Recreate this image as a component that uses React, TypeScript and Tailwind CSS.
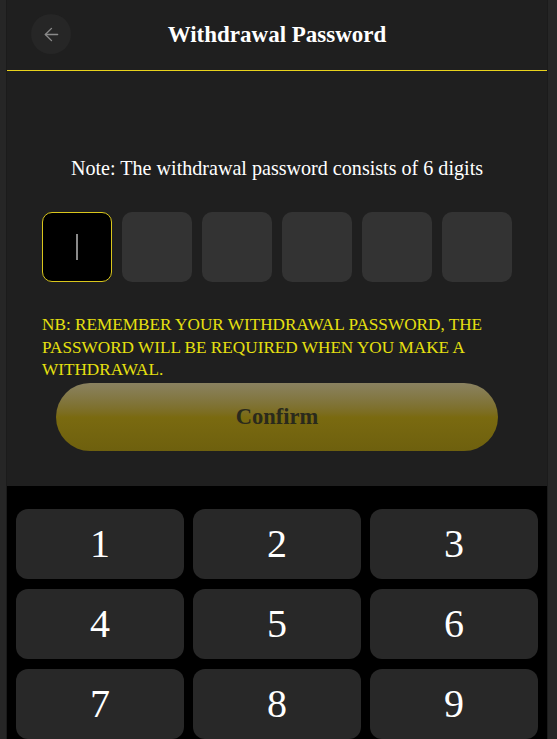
import React from "react";

const serif = { fontFamily: '"Liberation Serif", "Times New Roman", serif' };

function BackArrow() {
  return (
    <svg width="21" height="21" viewBox="0 0 24 24" fill="none" stroke="#8a8a8a" strokeWidth="1.6" strokeLinecap="round" strokeLinejoin="round">
      <path d="M19 12H5" />
      <path d="M12 19l-7-7 7-7" />
    </svg>
  );
}

export default function App() {
  const keys = ["1", "2", "3", "4", "5", "6", "7", "8", "9"];
  return (
    <div className="min-h-screen w-full bg-[#262626] flex pl-[6px]" style={serif}>
      <div className="w-[542px] h-[739px] overflow-hidden border-x border-[#1b1b1b] bg-[#1f1f1f] flex flex-col">
        {/* header */}
        <div className="relative h-[71px] shrink-0 flex items-center justify-center border-b border-[#e8d21c]">
          <button className="absolute left-[24px] top-[14px] w-[40px] h-[40px] rounded-full bg-[#262626] flex items-center justify-center">
            <BackArrow />
          </button>
          <h1 className="text-[23px] leading-[28px] font-bold text-white">Withdrawal Password</h1>
        </div>

        {/* form */}
        <div className="h-[415px] shrink-0 flex flex-col items-center pt-[85px]">
          <p className="text-[20.1px] leading-[24px] text-white">Note: The withdrawal password consists of 6 digits</p>
          <div className="mt-[32px] flex gap-[10px]">
            <div className="w-[70px] h-[70px] rounded-[10px] bg-black border border-[#d9c61c] flex items-center justify-center">
              <div className="w-[2px] h-[26px] bg-[#8a8a8a]" />
            </div>
            {[0, 1, 2, 3, 4].map((i) => (
              <div key={i} className="w-[70px] h-[70px] rounded-[10px] bg-[#333333]" />
            ))}
          </div>
          <p className="mt-[32px] w-[470px] text-[17.2px] leading-[22.5px] text-[#e6e010] uppercase">
            NB: Remember your withdrawal password, the password will be required when you make a withdrawal.
          </p>
          <button className="mt-[1px] w-[442px] h-[68px] rounded-full bg-gradient-to-b from-[#8a8260] via-[#7a6a10] to-[#6e600e] flex items-center justify-center">
            <span className="text-[22.5px] font-bold text-[#2a2a1c]">Confirm</span>
          </button>
        </div>

        {/* keypad */}
        <div className="flex-1 bg-black px-[9px] pt-[23px]">
          <div className="grid grid-cols-3 gap-x-[9px] gap-y-[10px]">
            {keys.map((k) => (
              <button key={k} className="h-[70px] rounded-[12px] bg-[#282828] flex items-center justify-center text-[40px] text-white">
                {k}
              </button>
            ))}
          </div>
        </div>
      </div>
    </div>
  );
}
